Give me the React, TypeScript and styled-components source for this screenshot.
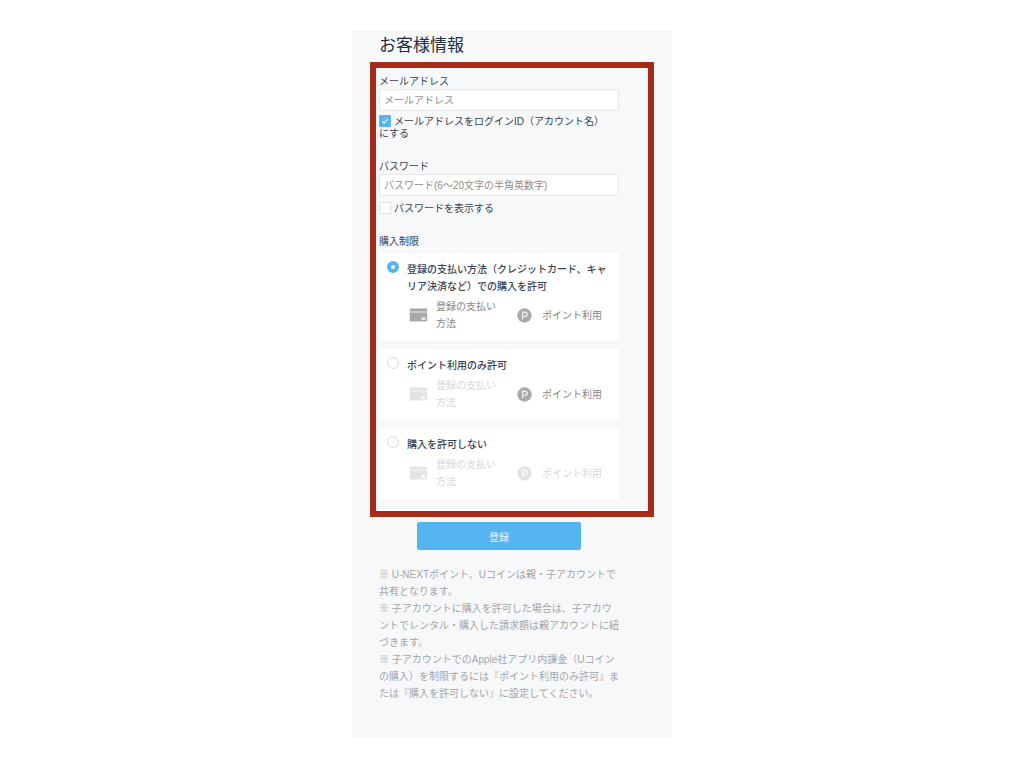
import React, { useState } from "react";
import styled, { createGlobalStyle } from "styled-components";

const GlobalStyle = createGlobalStyle`
  *, *::before, *::after { box-sizing: border-box; }
  body {
    margin: 0;
    background: #ffffff;
    color: #3a414e;
    font-family: "Liberation Sans", "Noto Sans CJK JP", sans-serif;
    font-size: 10px;
  }
`;

const Panel = styled.main`
  width: 100%;
  max-width: 320px;
  margin: 31px auto;
  padding: 3px 18px 36px;
  background: #f7f8fa;
`;

const Title = styled.h1`
  margin: 0 0 4px;
  padding-left: 9px;
  font-size: 17px;
  line-height: 24px;
  font-weight: 400;
  color: #252d3d;
`;

const Frame = styled.div`
  border: 6px solid #a62b19;
  padding: 7px 29px 12px 3px;
`;

const Group = styled.div`
  margin-bottom: 20px;
`;

const FieldLabel = styled.label`
  display: block;
  line-height: 14px;
`;

const TextField = styled.input`
  display: block;
  width: 100%;
  height: 22px;
  padding: 0 4px;
  border: 1px solid #e4e6e9;
  border-radius: 2px;
  background: #ffffff;
  color: #3a414e;
  font: inherit;
  outline-color: #55b5f0;

  &::placeholder {
    color: #8e8e8e;
    opacity: 1;
  }
`;

const CheckLabel = styled.label<{ $gap: number }>`
  display: block;
  margin-top: ${(p) => p.$gap}px;
  padding-right: 8px;
  line-height: 12px;
`;

const Checkbox = styled.input`
  appearance: none;
  display: inline-grid;
  place-items: center;
  width: 12px;
  height: 12px;
  margin: -1px 3px 0 0;
  border: 1px solid #dfe1e4;
  border-radius: 1px;
  background: #ffffff;
  vertical-align: top;

  &:checked {
    border-color: #55b5f0;
    background: #55b5f0;
  }

  &:checked::after {
    content: "";
    width: 6px;
    height: 3px;
    margin-bottom: 2px;
    border-left: 1px solid #ffffff;
    border-bottom: 1px solid #ffffff;
    transform: rotate(-45deg);
  }
`;

const Options = styled.fieldset`
  min-width: 0;
  margin: 0;
  padding: 0;
  border: 0;
`;

const Legend = styled.legend`
  padding: 0 0 4px;
  line-height: 14px;
`;

const OptionList = styled.div`
  display: grid;
  gap: 8px;
`;

const OptionCard = styled.label`
  display: grid;
  grid-template-columns: 12px 1fr;
  column-gap: 8px;
  align-items: start;
  padding: 8px;
  border-radius: 2px;
  background: #ffffff;
  line-height: 17px;
`;

const Radio = styled.input`
  appearance: none;
  width: 12px;
  height: 12px;
  margin: 0;
  border: 1px solid #d9dbde;
  border-radius: 50%;
  background: #ffffff;

  &:checked {
    border: 4px solid #55b5f0;
  }
`;

const OptionTitle = styled.span`
  display: block;
  margin-bottom: 3px;
  font-weight: 500;
  color: #394150;
`;

const Methods = styled.span`
  display: flex;
  align-items: center;
  gap: 21px;
  padding: 0 0 1px 2px;
`;

const Method = styled.span<{ $off: boolean }>`
  display: flex;
  align-items: center;
  color: ${(p) => (p.$off ? "#d8d8d8" : "#868686")};

  svg {
    flex: none;
    color: ${(p) => (p.$off ? "#e3e3e3" : "#a9a9a9")};
  }
`;

const MethodText = styled.span<{ $gap: number }>`
  width: 60px;
  margin-left: ${(p) => p.$gap}px;
`;

const Submit = styled.button`
  display: block;
  width: 164px;
  height: 28px;
  margin: 5px auto 16px 47px;
  padding: 0;
  border: 0;
  border-radius: 2px;
  background: #55b5f0;
  color: #e6f4fd;
  font: inherit;
  cursor: pointer;
`;

const Notes = styled.div`
  padding: 0 35px 0 9px;
  line-height: 17px;
  color: #a3a5a9;
`;

const Note = styled.p`
  margin: 0;
`;

function CardIcon() {
  return (
    <svg width="19" height="14" viewBox="0 0 19 14" aria-hidden="true">
      <path
        fill="currentColor"
        d="M1.500.5h16a.7.7 0 0 1 .7.7V3H.8V1.200A.7.7 0 0 1 1.500.5ZM.8 4.500h17.400v8.300a.7.7 0 0 1-.7.7h-16a.7.7 0 0 1-.7-.7Z"
      />
      <path fill="currentColor" opacity=".6" d="M.8 3h17.400v1.500H.8Z" />
      <path fill="#ffffff" opacity=".65" d="M12.500 9h4v3h-4Z" />
    </svg>
  );
}

function PointIcon() {
  return (
    <svg width="15" height="15" viewBox="0 0 15 15" aria-hidden="true">
      <circle cx="7.500" cy="7.500" r="7.200" fill="currentColor" />
      <path
        d="M5.600 11.300V4.200h2.500a2.100 2.100 0 0 1 0 4.200H5.600"
        fill="none"
        stroke="#ffffff"
        strokeOpacity=".75"
        strokeWidth="1.400"
      />
    </svg>
  );
}

const choices = [
  {
    id: "all",
    title: "登録の支払い方法（クレジットカード、キャリア決済など）での購入を許可",
    payment: true,
    points: true,
  },
  { id: "points", title: "ポイント利用のみ許可", payment: false, points: true },
  { id: "none", title: "購入を許可しない", payment: false, points: false },
];

const notes = [
  "※ U-NEXTポイント、Uコインは親・子アカウントで共有となります。",
  "※ 子アカウントに購入を許可した場合は、子アカウントでレンタル・購入した請求額は親アカウントに紐づきます。",
  "※ 子アカウントでのApple社アプリ内課金（Uコインの購入）を制限するには『ポイント利用のみ許可』または『購入を許可しない』に設定してください。",
];

export default function App() {
  const [choice, setChoice] = useState("all");
  const [visible, setVisible] = useState(false);

  return (
    <>
      <GlobalStyle />
      <Panel lang="ja">
        <Title>お客様情報</Title>
        <form onSubmit={(e) => e.preventDefault()}>
          <Frame>
            <Group>
              <FieldLabel htmlFor="email">メールアドレス</FieldLabel>
              <TextField id="email" type="email" placeholder="メールアドレス" />
              <CheckLabel $gap={5}>
                <Checkbox type="checkbox" defaultChecked />
                メールアドレスをログインID（アカウント名）にする
              </CheckLabel>
            </Group>
            <Group>
              <FieldLabel htmlFor="password">パスワード</FieldLabel>
              <TextField
                id="password"
                type={visible ? "text" : "password"}
                placeholder="パスワード(6〜20文字の半角英数字)"
              />
              <CheckLabel $gap={7}>
                <Checkbox
                  type="checkbox"
                  checked={visible}
                  onChange={(e) => setVisible(e.target.checked)}
                />
                パスワードを表示する
              </CheckLabel>
            </Group>
            <Options>
              <Legend>購入制限</Legend>
              <OptionList>
                {choices.map((c) => (
                  <OptionCard key={c.id}>
                    <Radio
                      type="radio"
                      name="purchase"
                      value={c.id}
                      checked={choice === c.id}
                      onChange={() => setChoice(c.id)}
                    />
                    <span>
                      <OptionTitle>{c.title}</OptionTitle>
                      <Methods>
                        <Method $off={!c.payment}>
                          <CardIcon />
                          <MethodText $gap={8}>登録の支払い方法</MethodText>
                        </Method>
                        <Method $off={!c.points}>
                          <PointIcon />
                          <MethodText $gap={10}>ポイント利用</MethodText>
                        </Method>
                      </Methods>
                    </span>
                  </OptionCard>
                ))}
              </OptionList>
            </Options>
          </Frame>
          <Submit type="submit">登録</Submit>
        </form>
        <Notes>
          {notes.map((n) => (
            <Note key={n}>{n}</Note>
          ))}
        </Notes>
      </Panel>
    </>
  );
}
